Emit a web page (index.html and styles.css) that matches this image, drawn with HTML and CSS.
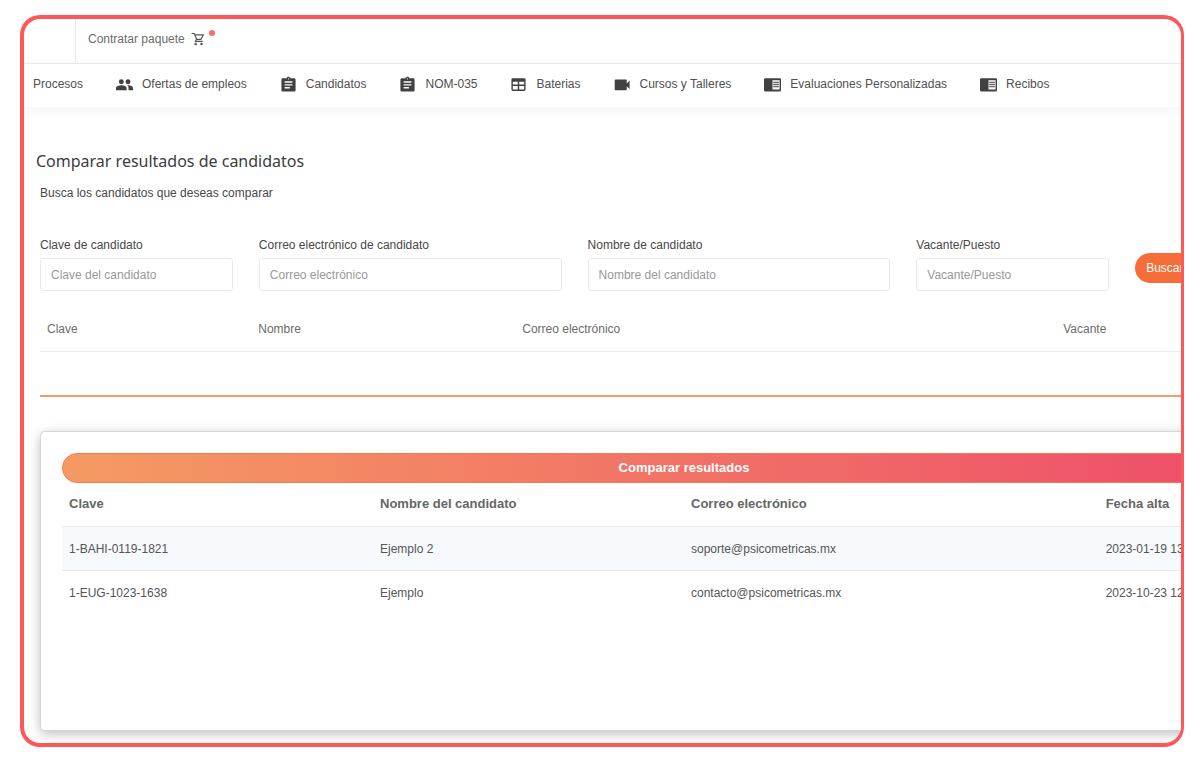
FILE: index.html
```html
<!DOCTYPE html>
<html lang="es">
<head>
<meta charset="utf-8">
<title>Comparar resultados de candidatos</title>
<link rel="stylesheet" href="styles.css">
</head>
<body>
<div class="frame">
  <header class="topbar">
    <div class="brand"></div>
    <a class="cart" href="#">Contratar paquete
      <svg class="cart-icon" viewBox="0 0 24 24" aria-hidden="true"><path d="M1 2.500h4.500l4 9.500-2 4H20M6 5h15l-4 7.500H9" fill="none" stroke="#555" stroke-width="2"/><circle cx="8" cy="20.500" r="2.200"/><circle cx="18" cy="20.500" r="2.200"/></svg>
      <span class="dot"></span>
    </a>
  </header>
  <nav class="nav">
    <a href="#">Procesos</a>
    <a href="#"><svg viewBox="0 0 24 24" aria-hidden="true"><path d="M17 11.500a3.500 3.500 0 1 0 0-7 3.500 3.500 0 0 0 0 7zM7.500 11.500a3.500 3.500 0 1 0 0-7 3.500 3.500 0 0 0 0 7zM7.500 13C5 13 0 14.200 0 16.800V20h15v-3.200C15 14.200 10 13 7.500 13zm9.500 0-1.300.1c1.200.9 2 2.100 2 3.700V20H24v-3.200c0-2.600-4.500-3.800-7-3.800z"/></svg>Ofertas de empleos</a>
    <a href="#"><svg viewBox="0 0 24 24" aria-hidden="true"><path d="M20 3h-5.180C14.400 1.840 13.300 1 12 1s-2.400.840-2.820 2H4c-1.100 0-2 .900-2 2v15c0 1.100.900 2 2 2h16c1.100 0 2-.900 2-2V5c0-1.100-.900-2-2-2zm-8 0c.550 0 1 .450 1 1s-.450 1-1 1-1-.450-1-1 .450-1 1-1zm2 14.500H6.500v-2H14v2zm3.500-4h-11v-2h11v2zm0-4h-11v-2h11v2z"/></svg>Candidatos</a>
    <a href="#"><svg viewBox="0 0 24 24" aria-hidden="true"><path d="M20 3h-5.180C14.400 1.840 13.300 1 12 1s-2.400.840-2.820 2H4c-1.100 0-2 .900-2 2v15c0 1.100.900 2 2 2h16c1.100 0 2-.900 2-2V5c0-1.100-.900-2-2-2zm-8 0c.550 0 1 .450 1 1s-.450 1-1 1-1-.450-1-1 .450-1 1-1zm2 14.500H6.500v-2H14v2zm3.500-4h-11v-2h11v2zm0-4h-11v-2h11v2z"/></svg>NOM-035</a>
    <a href="#"><svg viewBox="0 0 24 24" aria-hidden="true"><path fill-rule="evenodd" d="M4 3h16a2 2 0 0 1 2 2v14a2 2 0 0 1-2 2H4a2 2 0 0 1-2-2V5a2 2 0 0 1 2-2zm0 5v4h7V8zm9 0v4h7V8zm-9 6v5h7v-5zm9 0v5h7v-5z"/></svg>Baterias</a>
    <a href="#"><svg viewBox="0 0 24 24" aria-hidden="true"><path d="M18 10.500V6c0-.550-.450-1-1-1H2c-.550 0-1 .450-1 1v13c0 .550.450 1 1 1h15c.550 0 1-.450 1-1v-4.500l4 4v-12l-4 4z"/></svg>Cursos y Talleres</a>
    <a href="#"><svg viewBox="0 0 24 24" aria-hidden="true"><path fill-rule="evenodd" d="M2 3h20a2 2 0 0 1 2 2v15a2 2 0 0 1-2 2H2a2 2 0 0 1-2-2V5a2 2 0 0 1 2-2zm10 3v13h10V6z"/><path d="M13 8h8v2h-8zm0 3h8v2h-8zm0 3h8v2h-8z" opacity=".8"/></svg>Evaluaciones Personalizadas</a>
    <a href="#"><svg viewBox="0 0 24 24" aria-hidden="true"><path fill-rule="evenodd" d="M2 3h20a2 2 0 0 1 2 2v15a2 2 0 0 1-2 2H2a2 2 0 0 1-2-2V5a2 2 0 0 1 2-2zm10 3v13h10V6z"/><path d="M13 8h8v2h-8zm0 3h8v2h-8zm0 3h8v2h-8z" opacity=".8"/></svg>Recibos</a>
  </nav>
  <main class="content">
    <h1>Comparar resultados de candidatos</h1>
    <p class="intro">Busca los candidatos que deseas comparar</p>
    <form class="filters">
      <div class="field"><label for="clave">Clave de candidato</label><input id="clave" type="text" placeholder="Clave del candidato"></div>
      <div class="field"><label for="correo">Correo electrónico de candidato</label><input id="correo" type="text" placeholder="Correo electrónico"></div>
      <div class="field"><label for="nombre">Nombre de candidato</label><input id="nombre" type="text" placeholder="Nombre del candidato"></div>
      <div class="field"><label for="vacante">Vacante/Puesto</label><input id="vacante" type="text" placeholder="Vacante/Puesto"></div>
      <div class="action"><button class="search" type="button">Buscar</button></div>
    </form>
    <table class="found">
      <thead><tr><th class="w-key">Clave</th><th class="w-name">Nombre</th><th class="w-mail">Correo electrónico</th><th>Vacante</th></tr></thead>
    </table>
    <hr class="divider">
    <section class="card">
      <button class="compare" type="button">Comparar resultados</button>
      <table class="selected">
        <thead><tr><th class="w-quarter">Clave</th><th class="w-quarter">Nombre del candidato</th><th class="w-third">Correo electrónico</th><th>Fecha alta</th></tr></thead>
        <tbody>
          <tr><td>1-BAHI-0119-1821</td><td>Ejemplo 2</td><td>soporte@psicometricas.mx</td><td>2023-01-19 13</td></tr>
          <tr><td>1-EUG-1023-1638</td><td>Ejemplo</td><td>contacto@psicometricas.mx</td><td>2023-10-23 12</td></tr>
        </tbody>
      </table>
    </section>
  </main>
</div>
</body>
</html>
```
FILE: styles.css
```css
* { box-sizing: border-box; }
body {
  margin: 0;
  padding: 15px 16px 16px 20px;
  background: #fff;
  color: #484848;
  font: 12px/16px "Liberation Sans", Arial, sans-serif;
}
a { color: inherit; text-decoration: none; }
.frame {
  overflow: hidden;
  border: 4px solid #ff5757;
  border-right-width: 3px;
  border-radius: 20px;
}
.topbar {
  display: flex;
  height: 45px;
  border-bottom: 1px solid #ececec;
}
.brand { width: 52px; margin-bottom: 1px; border-right: 1px solid #e8e8e8; }
.cart {
  display: flex;
  align-items: center;
  gap: 6px;
  padding: 0 12px 4px;
  color: #6c6c6c;
}
.cart-icon { width: 14px; height: 14px; fill: #555; }
.dot {
  width: 6px;
  height: 6px;
  margin: 0 0 12px -2px;
  border-radius: 50%;
  background: #ff6b6b;
}
.nav {
  position: relative;
  display: flex;
  gap: 33px;
  height: 43px;
  padding: 0 9px 3px;
  color: #505050;
  white-space: nowrap;
  box-shadow: 0 2px 14px rgba(0, 0, 0, .06);
}
.nav a { display: flex; align-items: center; gap: 9px; }
.nav svg { width: 17px; height: 17px; fill: #414141; }
.content {
  margin-right: -147px;
  padding: 42px 0 12px 16px;
}
h1 {
  margin: 0 -4px 11px;
  color: #3c3c3c;
  font: 400 16px/24px "Noto Sans", sans-serif;
}
.intro { margin: 0 0 35px; line-height: 18px; }
.filters {
  display: grid;
  grid-template-columns: 193fr 303fr 303fr 193fr 193fr;
  gap: 26px;
}
.field { display: flex; flex-direction: column; gap: 5px; }
.field input {
  width: 100%;
  height: 33px;
  padding: 0 10px;
  border: 1px solid #e8e9ec;
  border-radius: 3px;
  background: #fff;
  color: #484848;
  font: inherit;
}
.field input::placeholder { color: #999; opacity: 1; }
.action { padding-top: 16px; }
.search {
  height: 30px;
  padding: 0 11px;
  border: 0;
  border-radius: 15px;
  background: #f66d37;
  color: #fff;
  font: inherit;
}
table { width: 100%; border-collapse: collapse; table-layout: fixed; }
th, td { height: 44px; padding: 0 7px; text-align: left; border-bottom: 1px solid #e9ecef; }
.found { margin-top: 16px; color: #6c6c6c; }
.found th { font-weight: 400; }
.w-key { width: 16.4%; }
.w-name { width: 20.5%; }
.w-mail { width: 42%; }
.w-quarter { width: 25%; }
.w-third { width: 33.333%; }
.divider { height: 2px; margin: 43px 0 34px; border: 0; background: #f59a68; }
.card {
  min-height: 300px;
  padding: 21px;
  border: 1px solid #d6d6d6;
  border-radius: 5px;
  background: #fff;
  box-shadow: 0 3px 12px rgba(0, 0, 0, .25);
}
.compare {
  display: block;
  width: 100%;
  height: 30px;
  border: 1px solid #f4794e;
  border-radius: 15px;
  background: linear-gradient(90deg, #f59a62, #ee4f6a 93%);
  color: #fff;
  font: 700 13px/16px "Liberation Sans", Arial, sans-serif;
}
.selected th { color: #666; font-size: 13px; }
.selected td { color: #555; }
.selected tbody tr:nth-child(odd) { background: #f6fafd; }
.selected tbody tr:last-child td { border-bottom: 0; }
```
